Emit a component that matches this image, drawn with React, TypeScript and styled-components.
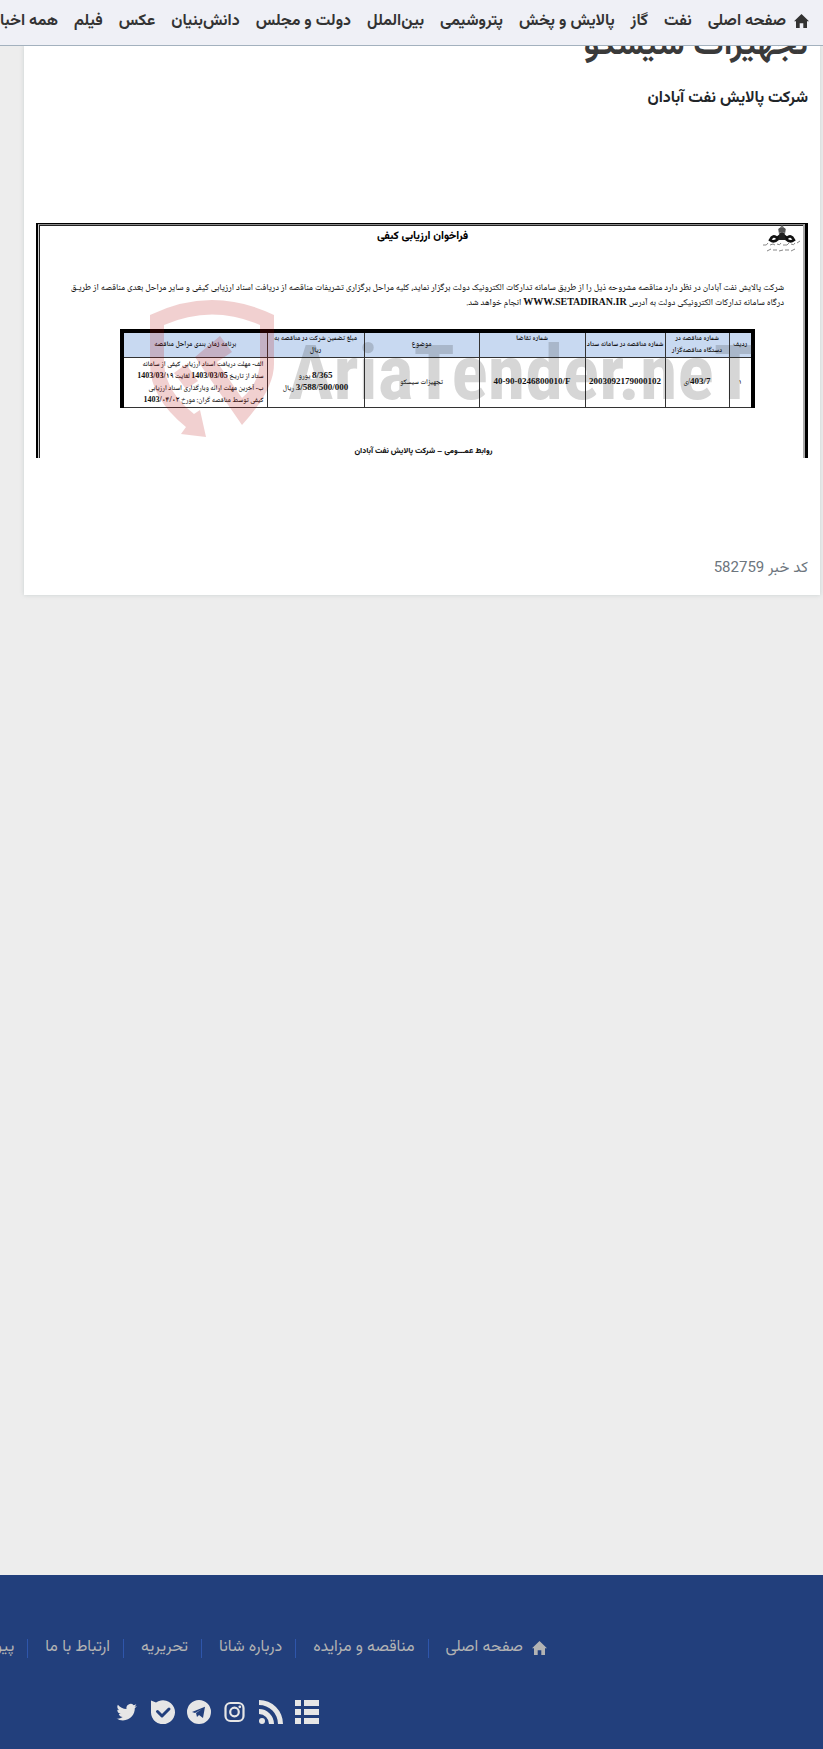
import React from "react";
import styled, { createGlobalStyle } from "styled-components";

const GlobalStyle = createGlobalStyle`
  * { box-sizing: border-box; }
  body {
    margin: 0;
    background: #ededed;
    font-family: Vazirmatn, Roboto, sans-serif;
    color: #333;
    overflow-x: hidden;
  }
  a { color: inherit; text-decoration: none; }
`;

const Page = styled.div`
  display: flex;
  flex-direction: column;
  min-height: 100vh;
`;

const TopBar = styled.header`
  position: sticky;
  top: 0;
  z-index: 5;
  height: 46px;
  background: #eff0f6;
  border-bottom: 1px solid #a3b1be;
  overflow: hidden;
`;

const TopMenu = styled.nav`
  display: flex;
  align-items: center;
  height: 44px;
  gap: 16px;
  padding-right: 14px;
  font-size: 16px;
  line-height: 32px;
  font-weight: 700;
  white-space: nowrap;
`;

const MenuLink = styled.a`
  display: flex;
  flex: none;
  align-items: center;
  gap: 8px;

  svg { margin-bottom: 3px; }
`;

const Card = styled.main`
  margin: 0 3px 0 24px;
  padding: 18px 12px 10px;
  background: #fff;
  box-shadow: 0 0 4px rgba(120, 140, 140, 0.3);
`;

/* The headline runs on beneath the sticky bar. */
const Title = styled.h1`
  margin: -44px 0 0;
  font-size: 34px;
  line-height: 52px;
  font-weight: 700;
  color: #3a3a3a;
`;

const Subtitle = styled.p`
  margin: 11px 0 0;
  font-size: 16px;
  line-height: 32px;
  font-weight: 700;
  color: #212529;
`;

const Notice = styled.article`
  position: relative;
  margin-top: 108px;
  height: 235px;
  border: solid #000;
  border-width: 1px 3px 0 2px;
  color: #111;
`;

const NoticeFrame = styled.div`
  display: flex;
  flex-direction: column;
  height: 100%;
  border-style: solid;
  border-color: #8a8a8a #aaa #fff #ccc;
  border-width: 1px 2px 0 1px;
  box-shadow: inset 1px 1px 0 #222;
  padding: 0 19px 0 4px;
`;

const NoticeTop = styled.div`
  display: grid;
  grid-template-columns: 1fr auto 1fr;
  height: 56px;
  margin-right: -18px;
`;

const NoticeTitle = styled.h2`
  margin: 4px 0 0;
  font-size: 11px;
  line-height: 16px;
  font-weight: 800;
  color: #000;
`;

const NoticeText = styled.p`
  margin: 0;
  font-family: "Noto Naskh Arabic", Amiri, serif;
  font-size: 9px;
  font-weight: 500;
  line-height: 15px;
  white-space: nowrap;
`;

const TenderTable = styled.table`
  width: 635px;
  max-width: 100%;
  margin: 18px 29px 0 0;
  table-layout: fixed;
  border-collapse: collapse;
  border: solid #000;
  border-width: 4px 4px 1px 4px;
  font-family: "Noto Naskh Arabic", Amiri, serif;
  font-size: 7px;
  line-height: 12px;
`;

const HeadCell = styled.th`
  height: 25px;
  padding: 0;
  background: #c8d9f1;
  border: 1px solid #333;
  font-weight: 700;
  white-space: nowrap;
`;

const Cell = styled.td<{ $wide?: boolean }>`
  height: 50px;
  padding: 0 3px;
  border: 1px solid #333;
  font-weight: 600;
  text-align: ${(p) => (p.$wide ? "right" : "center")};
  white-space: nowrap;
`;

const Figure = styled.b<{ $size?: number }>`
  font-family: "Liberation Serif", "Noto Naskh Arabic", serif;
  font-size: ${(p) => p.$size ?? 9}px;
  line-height: 1;
  unicode-bidi: isolate;
  direction: ltr;
`;

const NoticeSign = styled.p`
  margin: 36px -20px 0 0;
  text-align: center;
  font-size: 8px;
  line-height: 14px;
  font-weight: 800;
`;

const Watermark = styled.div`
  position: absolute;
  top: 76px;
  left: 112px;
  display: flex;
  direction: ltr;
  align-items: flex-start;
  pointer-events: none;
  white-space: nowrap;
  gap: 13px;
  opacity: 0.18;
  color: #222;
`;

const WatermarkName = styled.span`
  margin-top: 35px;
  font-family: "Roboto Condensed", sans-serif;
  font-size: 76px;
  line-height: 76px;
  font-weight: 700;
`;

const NewsCode = styled.p`
  margin: 95px 0 0;
  font-size: 15px;
  line-height: 32px;
  color: #6c757d;
`;

const Footer = styled.footer`
  margin-top: auto;
  height: 174px;
  padding-top: 57px;
  background: #223f7c;
  overflow: hidden;
`;

const FooterMenu = styled.nav`
  display: flex;
  padding-right: 276px;
  color: #b3b3b3;
  font-size: 16px;
  line-height: 32px;
  white-space: nowrap;
`;

const FooterLink = styled.a`
  display: flex;
  flex: none;
  align-items: center;
  gap: 9px;

  & + &::before {
    content: "";
    width: 1px;
    height: 19px;
    margin: 0 17px 0 4px;
    background: #2f56ab;
  }
`;

const Social = styled.div`
  display: flex;
  gap: 12px;
  margin-top: 36px;
  padding-right: 504px;
  color: #e6e6e6;
`;

const SocialLink = styled.a`
  flex: none;
  width: 24px;
  height: 24px;
`;

const HomeIcon = () => (
  <svg width="15" height="14" viewBox="0 0 15 14" fill="currentColor" aria-hidden="true">
    <path d="M7.500 0 15 7.300h-2V14H9.300V9.300H5.700V14H2V7.300H0z" />
  </svg>
);

const Logo = () => (
  <svg width="40" height="30" viewBox="0 0 40 30" aria-hidden="true">
    <path d="M16 4q2-1 4-4 2 3 4 4l-1 5h-6z" fill="#777" />
    <path d="M17 6h6M17 4h6" stroke="#333" />
    <path d="M8 15q3-6 7-2l5-4 5 4q4-4 7 2-4 3-8-1l-4-2-4 2q-4 4-8 1z" fill="none" stroke="#111" strokeWidth="2.600" />
    <path d="M18 8h4l2 7h-8z" fill="#222" />
    <path d="M1 20q4 1 5-2M8 20l3-1 2 1M15 19q3 2 4-1M21 20h4l2-2M29 19q3 2 4-1M35 18l3-2M5 26l4-2M11 25h4M17 26l4-1M23 25h4M29 26l4-2" fill="none" stroke="#888" />
  </svg>
);

const Shield = () => (
  <svg width="125" height="138" viewBox="0 0 125 138" fill="#b40000" aria-hidden="true">
    <path d="M0 15Q62-15 124 15V64Q124 90 92 125L45 57 70 36 82 52 67 62 92 98Q110 82 110 60V25Q62 4 14 25V64Q16 92 44 114L50 110 56 137 31 134 36 127Q0 98 0 64z" />
    <path d="M24 73 36 64 48 81 36 89z" />
  </svg>
);

const topItems = [
  "نفت", "گاز", "پالایش و پخش", "پتروشیمی", "بین‌الملل", "دولت و مجلس",
  "دانش‌بنیان", "عکس", "فیلم", "همه اخبار",
];

const footerItems = ["مناقصه و مزایده", "درباره شانا", "تحریریه", "ارتباط با ما", "پیوندها"];

const social = [
  { name: "آرشیو", art: <path d="M0 0h6v6H0zM9 0h15v6H9zM0 9h6v6H0zM9 9h15v6H9zM0 18h6v6H0zM9 18h15v6H9z" /> },
  { name: "RSS", art: (
    <>
      <circle cx="3" cy="21" r="3" />
      <path d="M0 0A24 24 0 0 1 24 24h-5A19 19 0 0 0 0 5zM0 9A15 15 0 0 1 15 24h-5A10 10 0 0 0 0 14z" />
    </>
  ) },
  { name: "اینستاگرام", art: (
    <>
      <rect x="2.500" y="3" width="18" height="18" rx="5" fill="none" stroke="currentColor" strokeWidth="2.200" />
      <circle cx="11.500" cy="12" r="4.300" fill="none" stroke="currentColor" strokeWidth="2.200" />
      <circle cx="16.800" cy="6.800" r="1.400" />
    </>
  ) },
  { name: "تلگرام", art: (
    <path fillRule="evenodd" d="M12 0a12 12 0 1 0 0 24 12 12 0 0 0 0-24zM5 12 18 6.800 16 18l-4-3-2 2-1-4 6-4-7 4z" />
  ) },
  { name: "بله", art: (
    <>
      <path d="M0 0.500 5 2.500A12 12 0 1 1 0 12z" />
      <path d="m6.500 11.500 4.500 4.500 7-7" fill="none" stroke="#223f7c" strokeWidth="3" strokeLinecap="round" strokeLinejoin="round" />
    </>
  ) },
  { name: "توییتر", art: (
    <path transform="translate(1.500 2) scale(.85)" d="M23.950 4.570a10 10 0 0 1-2.820.77 4.960 4.960 0 0 0 2.160-2.720c-.95.55-2 .95-3.130 1.180a4.920 4.920 0 0 0-8.380 4.480C7.690 8.090 4.070 6.130 1.640 3.160a4.820 4.820 0 0 0-.67 2.480c0 1.710.87 3.210 2.190 4.090a4.900 4.900 0 0 1-2.230-.61v.06a4.920 4.920 0 0 0 3.950 4.830 4.990 4.990 0 0 1-2.210.08 4.940 4.940 0 0 0 4.600 3.420A9.870 9.870 0 0 1 0 19.540a13.990 13.990 0 0 0 7.550 2.210c9.050 0 14-7.500 14-13.980 0-.21 0-.42-.02-.63a9.940 9.940 0 0 0 2.420-2.570z" />
  ) },
];

export default function App() {
  return (
    <Page dir="rtl" lang="fa">
      <GlobalStyle />
      <TopBar>
        <TopMenu>
          <MenuLink href="#"><HomeIcon />صفحه اصلی</MenuLink>
          {topItems.map((t) => <MenuLink href="#" key={t}>{t}</MenuLink>)}
        </TopMenu>
      </TopBar>

      <Card>
        <Title>تجهیزات سیسکو</Title>
        <Subtitle>شرکت پالایش نفت آبادان</Subtitle>
        <Notice>
          <NoticeFrame>
            <NoticeTop>
              <Logo />
              <NoticeTitle>فراخوان ارزیابی کیفی</NoticeTitle>
            </NoticeTop>
            <NoticeText>
              شرکت پالایش نفت آبادان در نظر دارد مناقصه مشروحه ذیل را از طریق سامانه تدارکات الکترونیک دولت برگزار نماید، کلیه مراحل برگزاری تشریفات مناقصه از دریافت اسناد ارزیابی کیفی و سایر مراحل بعدی مناقصه از طریـق
              <br />
              درگاه سامانه تدارکات الکترونیکی دولت به آدرس <Figure $size={10}>WWW.SETADIRAN.IR</Figure> انجام خواهد شد.
            </NoticeText>
            <TenderTable>
              <colgroup>
                <col width="24" /><col width="64" /><col width="80" /><col width="106" />
                <col width="115" /><col width="97" /><col />
              </colgroup>
              <thead>
                <tr>
                  <HeadCell>ردیف</HeadCell>
                  <HeadCell>شماره مناقصه در<br />دستگاه مناقصه‌گزار</HeadCell>
                  <HeadCell>شماره مناقصه در سامانه ستاد</HeadCell>
                  <HeadCell>شماره تقاضا<br />&nbsp;</HeadCell>
                  <HeadCell>موضوع</HeadCell>
                  <HeadCell>مبلغ تضمین شرکت در مناقصه به<br />ریال</HeadCell>
                  <HeadCell>برنامه زمان بندی مراحل مناقصه</HeadCell>
                </tr>
              </thead>
              <tbody>
                <tr>
                  <Cell>۱</Cell>
                  <Cell><Figure>403/7</Figure>/ی</Cell>
                  <Cell><Figure>2003092179000102</Figure></Cell>
                  <Cell><Figure>40-90-0246800010/F</Figure></Cell>
                  <Cell>تجهیزات سیسکو</Cell>
                  <Cell><Figure>8/365</Figure> یورو<br /><Figure>3/588/500/000</Figure> ریال</Cell>
                  <Cell $wide>
                    الف- مهلت دریافت اسناد ارزیابی کیفی از سامانه<br />
                    ستاد از تاریخ <Figure $size={8}>1403/03/05</Figure> لغایت <Figure $size={8}>1403/03/۱۹</Figure><br />
                    ب- آخرین مهلت ارائه وبارگذاری اسناد ارزیابی<br />
                    کیفی توسط مناقصه گران: مورخ <Figure $size={8}>1403/۰۴/۰۲</Figure>
                  </Cell>
                </tr>
              </tbody>
            </TenderTable>
            <NoticeSign>روابط عمـــومی – شرکت پالایش نفت آبادان</NoticeSign>
          </NoticeFrame>
          <Watermark>
            <Shield />
            <WatermarkName>AriaTender.neT</WatermarkName>
          </Watermark>
        </Notice>
        <NewsCode>کد خبر 582759</NewsCode>
      </Card>

      <Footer>
        <FooterMenu>
          <FooterLink href="#"><HomeIcon />صفحه اصلی</FooterLink>
          {footerItems.map((t) => <FooterLink href="#" key={t}>{t}</FooterLink>)}
        </FooterMenu>
        <Social>
          {social.map((s) => (
            <SocialLink href="#" key={s.name} aria-label={s.name}>
              <svg width="24" height="24" viewBox="0 0 24 24" fill="currentColor" aria-hidden="true">{s.art}</svg>
            </SocialLink>
          ))}
        </Social>
      </Footer>
    </Page>
  );
}
